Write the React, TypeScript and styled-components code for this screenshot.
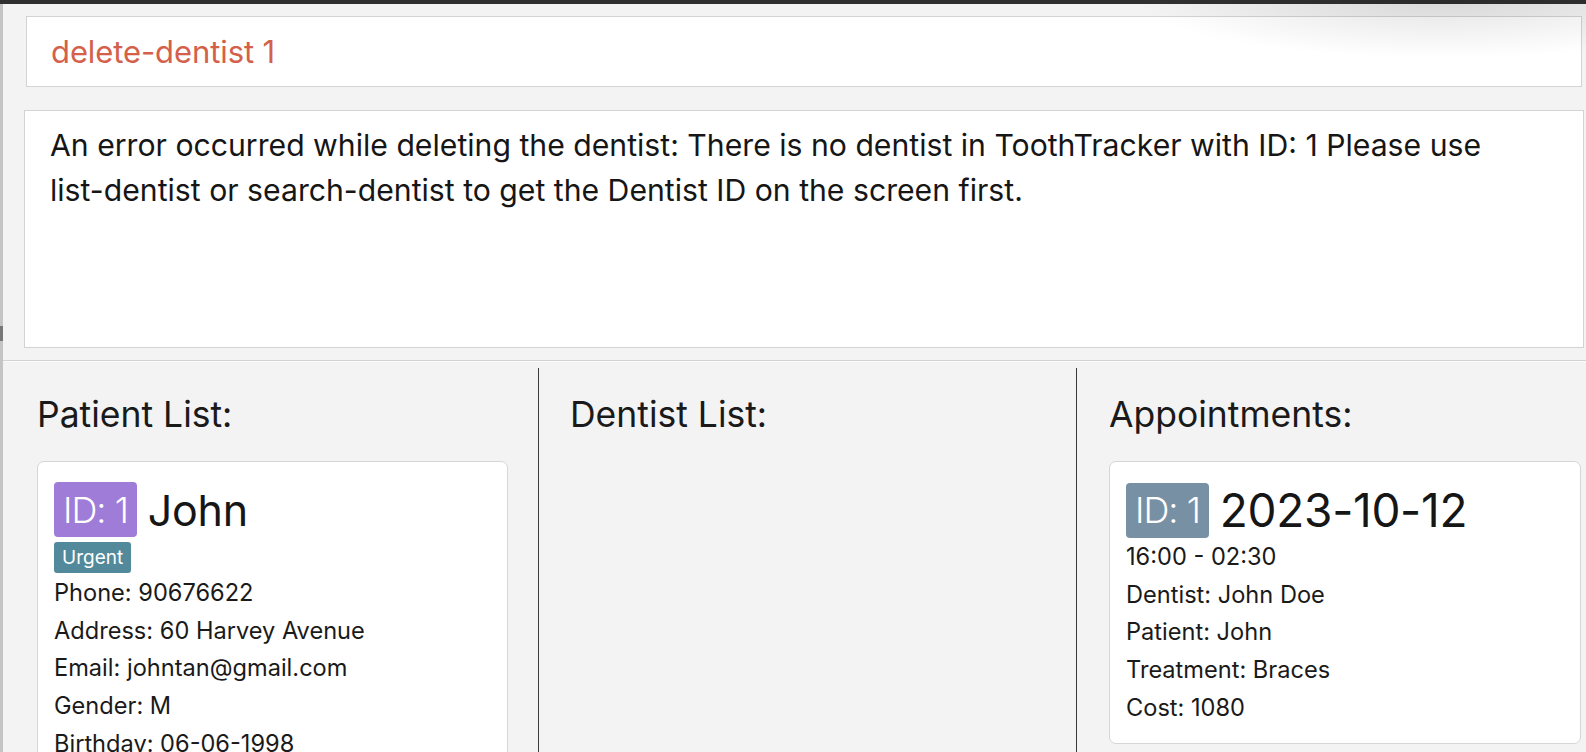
import { createGlobalStyle, styled } from 'styled-components';

const GlobalStyle = createGlobalStyle`
  html, body {
    margin: 0;
    padding: 0;
    background: #f3f3f3;
    overflow: hidden;
  }
  * {
    box-sizing: border-box;
  }
`;

const Window = styled.div`
  position: relative;
  width: 1586px;
  height: 752px;
  overflow: hidden;
  display: flex;
  flex-direction: column;
  background: #f3f3f3;
  font-family: Inter, 'Noto Sans', sans-serif;
  color: #1c1c1c;
`;

const TopFrame = styled.div`
  height: 4px;
  flex-shrink: 0;
  background: #303030;
`;

const Body = styled.div`
  flex: 1;
  display: flex;
  flex-direction: row;
  min-height: 0;
`;

const LeftEdge = styled.div`
  width: 3px;
  flex-shrink: 0;
  background: linear-gradient(to bottom, #c4c4c4 0%, #c4c4c4 43%, #777 43%, #777 45%, #c4c4c4 45%);
`;

const Main = styled.div`
  flex: 1;
  display: flex;
  flex-direction: column;
  min-width: 0;
`;

const CommandBox = styled.div`
  margin: 12px 4px 0 23px;
  height: 71px;
  background: #fff;
  border: 1px solid #d3d3d3;
  display: flex;
  align-items: center;
  padding-left: 24px;
  font-size: 31px;
  letter-spacing: -0.1px;
  color: #d5604a;
`;

const ResultBox = styled.div`
  margin: 23px 2px 0 21px;
  height: 238px;
  background: #fff;
  border: 1px solid #d3d3d3;
  padding: 12px 60px 0 25px;
  font-size: 30.2px;
  line-height: 45px;
  color: #161616;
`;

const CommandWord = styled.span`
  white-space: nowrap;
`;

const Separator = styled.div`
  margin-top: 12px;
  height: 2px;
  border-top: 1px solid #d2d2d2;
  border-bottom: 1px solid #fbfbfb;
`;

const Panels = styled.div`
  flex: 1;
  display: grid;
  grid-template-columns: 535px 1px 537px 1px 1fr;
  padding-top: 6px;
  min-height: 0;
`;

const Divider = styled.div`
  background: #3a3a3a;
`;

const Column = styled.div<{ $padLeft: number; $padRight: number }>`
  display: flex;
  flex-direction: column;
  padding: 0 ${({ $padRight }) => $padRight}px 0 ${({ $padLeft }) => $padLeft}px;
  min-width: 0;
`;

const ColumnTitle = styled.div`
  margin-top: 28px;
  font-size: 35.5px;
  line-height: 38px;
  color: #1a1a1a;
`;

const Card = styled.div`
  margin-top: 27px;
  background: #fff;
  border: 1px solid #d6d6d6;
  border-radius: 7px;
  padding: 20px 16px 16px 16px;
  display: flex;
  flex-direction: column;
`;

const HeaderRow = styled.div`
  display: flex;
  flex-direction: row;
  align-items: center;
  gap: 11px;
`;

const IdBadge = styled.div<{ $color: string }>`
  background: ${({ $color }) => $color};
  color: #fff;
  border-radius: 4px;
  height: 55px;
  padding: 0 9px;
  display: flex;
  align-items: center;
  font-size: 36px;
  letter-spacing: -1px;
  font-weight: 300;
`;

const HeaderText = styled.div<{ $size: number }>`
  font-size: ${({ $size }) => $size}px;
  letter-spacing: -0.3px;
  color: #161616;
`;

const Tag = styled.div`
  align-self: flex-start;
  margin-top: 5px;
  background: #528a9c;
  color: #fff;
  border-radius: 3px;
  height: 31px;
  padding: 0 8px;
  display: flex;
  align-items: center;
  font-size: 19px;
`;

const InfoLine = styled.div`
  font-size: 23.6px;
  line-height: 37.7px;
  color: #1a1a1a;
  white-space: nowrap;
`;

const FirstInfoLine = styled(InfoLine)`
  margin-top: 1px;
`;

const WindowShadow = styled.div`
  position: absolute;
  top: 0;
  right: 0;
  width: 580px;
  height: 110px;
  pointer-events: none;
  background: radial-gradient(ellipse 75% 75% at 75% 0%, rgba(0, 0, 0, 0.11), rgba(0, 0, 0, 0) 70%);
`;

const patient = {
  id: 1,
  name: 'John',
  tags: ['Urgent'],
  lines: [
    'Phone: 90676622',
    'Address: 60 Harvey Avenue',
    'Email: johntan@gmail.com',
    'Gender: M',
    'Birthday: 06-06-1998',
  ],
};

const appointment = {
  id: 1,
  date: '2023-10-12',
  lines: ['16:00 - 02:30', 'Dentist: John Doe', 'Patient: John', 'Treatment: Braces', 'Cost: 1080'],
};

export default function App() {
  return (
    <Window>
      <GlobalStyle />
      <TopFrame />
      <Body>
        <LeftEdge />
        <Main>
          <CommandBox>delete-dentist 1</CommandBox>
          <ResultBox>
            An error occurred while deleting the dentist: There is no dentist in ToothTracker with ID: 1 Please use{' '}
            <CommandWord>list-dentist</CommandWord> or <CommandWord>search-dentist</CommandWord> to get the Dentist ID
            on the screen first.
          </ResultBox>
          <Separator />
          <Panels>
            <Column $padLeft={34} $padRight={30}>
              <ColumnTitle>Patient List:</ColumnTitle>
              <Card>
                <HeaderRow>
                  <IdBadge $color="#a07cd9">ID: {patient.id}</IdBadge>
                  <HeaderText $size={43}>{patient.name}</HeaderText>
                </HeaderRow>
                {patient.tags.map((tag) => (
                  <Tag key={tag}>{tag}</Tag>
                ))}
                {patient.lines.map((line, i) =>
                  i === 0 ? <FirstInfoLine key={line}>{line}</FirstInfoLine> : <InfoLine key={line}>{line}</InfoLine>
                )}
              </Card>
            </Column>
            <Divider />
            <Column $padLeft={31} $padRight={31}>
              <ColumnTitle>Dentist List:</ColumnTitle>
            </Column>
            <Divider />
            <Column $padLeft={32} $padRight={5}>
              <ColumnTitle>Appointments:</ColumnTitle>
              <Card>
                <HeaderRow>
                  <IdBadge $color="#7890a4">ID: {appointment.id}</IdBadge>
                  <HeaderText $size={46}>{appointment.date}</HeaderText>
                </HeaderRow>
                {appointment.lines.map((line) => (
                  <InfoLine key={line}>{line}</InfoLine>
                ))}
              </Card>
            </Column>
          </Panels>
        </Main>
      </Body>
      <WindowShadow />
    </Window>
  );
}
